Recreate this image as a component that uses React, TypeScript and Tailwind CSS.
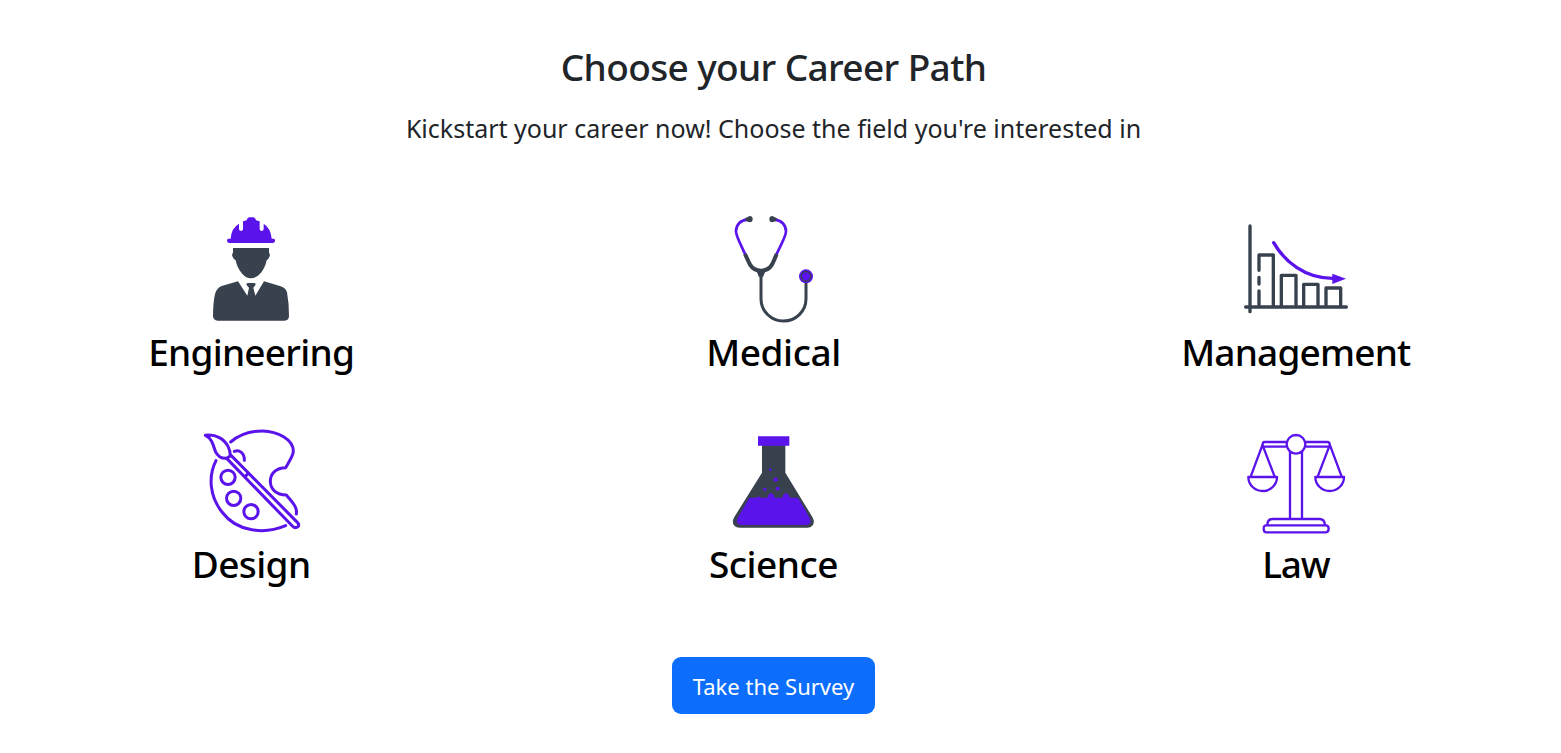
import type { ReactNode } from "react";

const PURPLE = "#5b13ec";
const SLATE = "#38414e";

function EngineerIcon() {
  return (
    <svg className="h-[120px] w-[110px]" viewBox="0 0 330 360">
      <path fill={PURPLE} d="M96 92H104Q106 60 129 47V64Q130 69 135 69T141 64V40L152 37Q154 28 160 28H172Q178 28 180 37L191 40V64Q192 69 197 69T203 64V47Q224 60 227 92H234Q238 94 237 99Q237 104 231 105H99Q93 104 93 98Q93 94 96 92Z" />
      <path fill={SLATE} d="M111 120H219V134Q223 138 221 145Q218 153 212 157Q208 178 195 194Q181 211 165 211Q149 211 136 194Q123 178 119 157Q112 153 109 145Q107 138 111 134Z" />
      <path fill={SLATE} d="M126 220L154 263L159 239L151 230Q151 225 155 225H175Q179 225 179 230L172 239L178 263L204 220L254 235Q269 240 273 253Q279 285 279 325Q278 338 266 338H65Q52 337 51 325Q51 285 57 258Q61 241 77 234Z" />
    </svg>
  );
}

function StethoscopeIcon() {
  return (
    <svg className="h-[120px] w-[106px]" viewBox="6 0 318 360" fill="none">
      <path stroke={PURPLE} strokeWidth="8" d="M82 35C61 36 48 51 48 70C48 84 54 91 76 140M163 35C184 36 198 51 198 70C198 84 192 91 169 140" />
      <path stroke={SLATE} strokeWidth="12" d="M75 138Q85 160 90 170Q101 188 123 188T156 170Q162 158 170 138" />
      <path fill={SLATE} d="M75 31L89 24Q98 24 98 34Q98 43 89 43L79 40ZM171 31L157 24Q148 24 148 34Q148 43 157 43L167 40ZM109 188H137L129 207H117Z" />
      <path stroke={SLATE} strokeWidth="9" d="M123 195V272A67 67 0 0 0 190 339A67 67 0 0 0 258 272V220" />
      <circle cx="258" cy="205" r="21" fill={PURPLE} />
      <circle cx="258" cy="205" r="14.5" stroke={SLATE} strokeWidth="4" />
    </svg>
  );
}

function ChartIcon() {
  return (
    <svg className="h-[120px] w-[120px]" viewBox="0 0 360 360" fill="none">
      <g stroke={SLATE} strokeWidth="10" strokeLinecap="round" strokeLinejoin="round">
        <path d="M42 54V311M29 297H331" />
        <path d="M69 187V141H112V295M69 208V228M69 249V295" />
        <path d="M136 295V202H180V295M203 295V229H246V295M270 295V240H314V295" />
      </g>
      <path d="M113 104C145 160 207 212 292 211" stroke={PURPLE} strokeWidth="10" strokeLinecap="round" />
      <path d="M289 197L330 212L289 228Z" fill={PURPLE} />
    </svg>
  );
}

function PaletteIcon() {
  return (
    <svg className="h-[120px] w-[110px]" viewBox="0 0 330 360" fill="none" stroke={PURPLE} strokeWidth="9" strokeLinecap="round" strokeLinejoin="round">
      <path d="M104 66C131 43 164 33 199 33C245 34 292 58 292 94C292 106 283 119 269 143C240 143 223 161 223 184C223 208 241 225 271 225C286 244 305 260 301 282" />
      <path d="M60 122C36 169 41 230 78 276C121 334 202 345 269 317" />
      <path d="M28 46C60 41 85 58 96 79Q103 92 103 108L92 115C78 116 65 109 58 94C52 75 47 54 28 46Z" />
      <path d="M92 115L289 318Q298 327 306 320Q311 314 304 307L105 106M148 169L156 161" />
      <path d="M115 94C130 88 146 99 145 121" />
      <circle cx="96" cy="172" r="21.5" />
      <circle cx="113" cy="235" r="21.5" />
      <circle cx="165" cy="275" r="21.5" />
    </svg>
  );
}

function FlaskIcon() {
  return (
    <svg className="h-[120px] w-[106px]" viewBox="6 0 318 360">
      <path fill={SLATE} d="M126 75H196V158L277 291Q286 307 277 317Q272 323 262 323H60Q49 323 43 317Q34 307 43 291L126 158Z" />
      <path fill={PURPLE} d="M114 49H208V77H114ZM88 233H108Q115 226 122 233H142Q145 220 153 220T164 233H187Q190 220 198 220T209 233H234L269 293Q275 305 268 311Q264 315 257 315H64Q56 315 53 310Q48 303 54 292Z" />
      <g fill={PURPLE}>
        <circle cx="151" cy="149" r="4" />
        <circle cx="167" cy="179" r="6.5" />
        <circle cx="134" cy="208" r="5" />
        <circle cx="173" cy="206" r="6" />
      </g>
    </svg>
  );
}

function ScalesIcon() {
  return (
    <svg className="h-[120px] w-[120px]" viewBox="0 0 360 360" fill="none" stroke={PURPLE} strokeWidth="7" strokeLinejoin="round">
      <circle cx="180" cy="73" r="28" />
      <path d="M152 66H86Q80 66 80 73L44 170M152 80H83M208 66H274Q281 66 281 73L317 170M208 80H278M80 76L116 170M281 76L245 170" />
      <path d="M37 171H123C123 195 103 213 80 213S37 195 37 171ZM238 171H324C324 195 304 213 281 213S238 195 238 171Z" />
      <path d="M162 96V297M198 96V297M94 316Q94 297 110 297H250Q266 297 267 316" />
      <path d="M92 316H269Q278 316 278 326T269 337H92Q83 337 83 326T92 316Z" />
    </svg>
  );
}

function Career({ label, tracking, shift = "", children }: { label: string; tracking: string; shift?: string; children: ReactNode }) {
  return (
    <div className="flex flex-col items-center">
      <div className={shift}>{children}</div>
      <h2 className={`h-[52px] text-[37px] leading-[48px] font-medium whitespace-nowrap text-black ${tracking}`}>{label}</h2>
    </div>
  );
}

export default function App() {
  return (
    <main className="h-[753px] w-full overflow-hidden bg-white pr-[14px] font-['Noto_Sans','Open_Sans',sans-serif]">
      <header className="flex flex-col items-center pt-[43px] text-[#212529]">
        <h1 className="text-[37px] leading-[48px] font-medium tracking-[-0.62px] whitespace-nowrap">Choose your Career Path</h1>
        <p className="mt-[19px] text-[25px] leading-[36px] whitespace-nowrap">Kickstart your career now! Choose the field you're interested in</p>
      </header>
      <section className="-mx-[10px] mt-[62px] grid grid-cols-3 gap-y-10">
        <Career label="Engineering" tracking="tracking-[-0.75px]"><EngineerIcon /></Career>
        <Career label="Medical" tracking="tracking-[-0.4px]" shift="pl-[3px]"><StethoscopeIcon /></Career>
        <Career label="Management" tracking="tracking-[-0.8px]"><ChartIcon /></Career>
        <Career label="Design" tracking="tracking-[-0.6px]"><PaletteIcon /></Career>
        <Career label="Science" tracking="tracking-[-0.45px]" shift="pl-[3px]"><FlaskIcon /></Career>
        <Career label="Law" tracking="tracking-[-1.2px]"><ScalesIcon /></Career>
      </section>
      <div className="mt-[65px] flex justify-center">
        <button className="flex h-[57px] w-[203px] items-center justify-center rounded-[9px] bg-[#0d6efd] pt-[2px] text-[22px] whitespace-nowrap text-white">Take the Survey</button>
      </div>
    </main>
  );
}
